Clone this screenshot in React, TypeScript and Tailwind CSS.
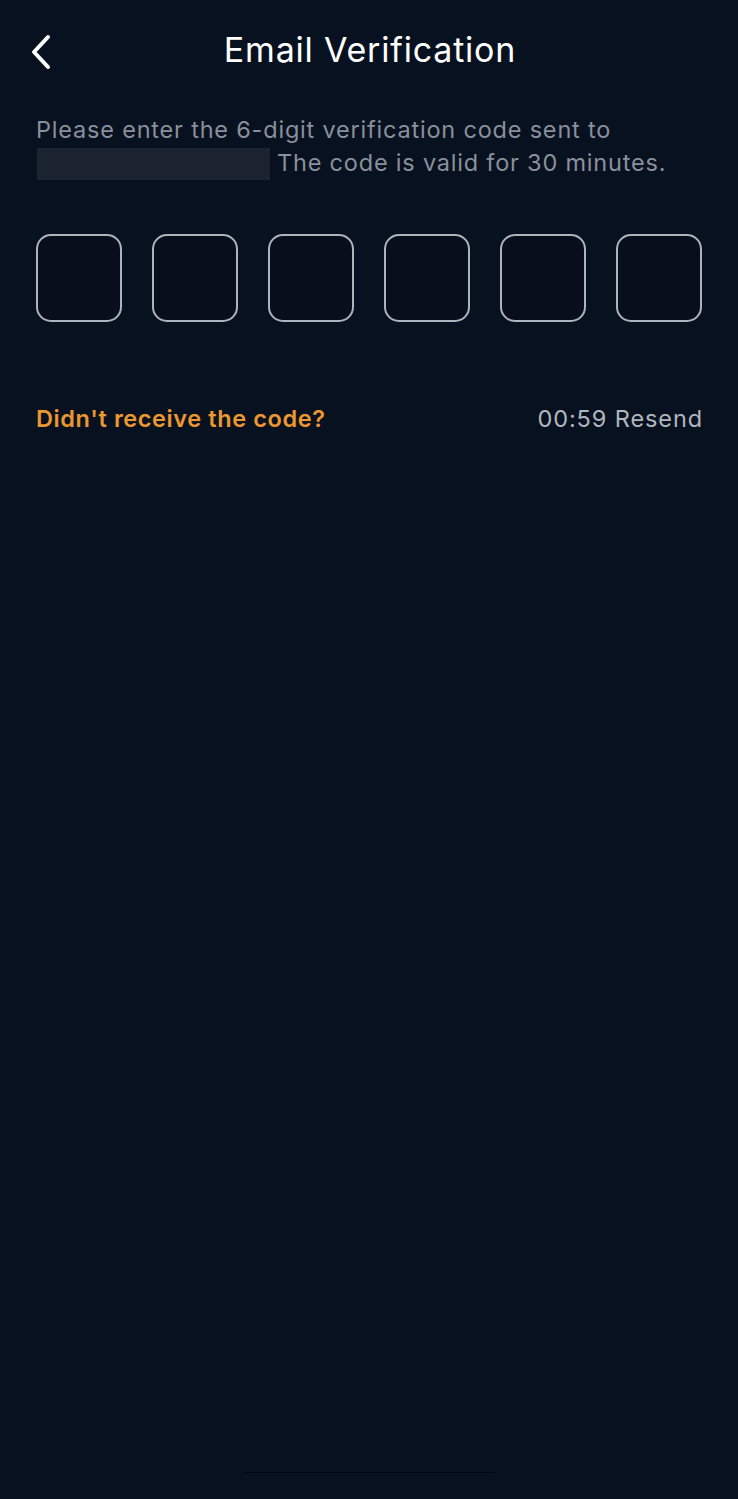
import React from "react";

export default function App() {
  return (
    <div
      className="w-[738px] h-[1499px] bg-[#08111f] flex flex-col overflow-hidden"
      style={{ fontFamily: "Inter, 'Noto Sans', sans-serif" }}
    >
      {/* Header */}
      <div className="relative h-[100px] flex items-center justify-center shrink-0">
        <button className="absolute left-[28px] top-[34px] w-[26px] h-[36px] flex items-center justify-center">
          <svg width="24" height="36" viewBox="0 0 24 36" fill="none">
            <path
              d="M19 3 L5 18 L19 33"
              stroke="#ffffff"
              strokeWidth="4"
              strokeLinecap="round"
              strokeLinejoin="round"
            />
          </svg>
        </button>
        <h1 className="text-[34px] leading-none text-white font-normal tracking-[0.8px] ml-[2px]">
          Email Verification
        </h1>
      </div>

      {/* Description */}
      <div className="px-[36px] pt-[14px] text-[23.5px] leading-[32px] text-[#8a909b] tracking-[0.8px]">
        <div>Please enter the 6-digit verification code sent to</div>
        <div className="flex items-center">
          <span className="inline-block w-[233px] h-[32px] bg-[#1b2331] mr-[7px] ml-[1px] mt-[2px]" />
          <span>The code is valid for 30 minutes.</span>
        </div>
      </div>

      {/* Code boxes */}
      <div className="px-[36px] pt-[54px] flex justify-between">
        {[0, 1, 2, 3, 4, 5].map((i) => (
          <div
            key={i}
            className="w-[86px] h-[88px] rounded-[15px] border-2 border-[#aeb4be] bg-[#070f1c]"
          />
        ))}
      </div>

      {/* Resend row */}
      <div className="px-[36px] pt-[79px] flex items-center justify-between">
        <span className="text-[23.5px] font-semibold text-[#eb9732] tracking-[0.6px]">
          Didn't receive the code?
        </span>
        <span className="text-[23.5px] text-[#b1b6bf] tracking-[0.9px] -mr-[1px]">00:59 Resend</span>
      </div>

      <div className="flex-1" />

      {/* Home indicator */}
      <div className="flex justify-center pb-[26px]">
        <div className="w-[252px] h-[1.5px] bg-[#030912]" />
      </div>
    </div>
  );
}
